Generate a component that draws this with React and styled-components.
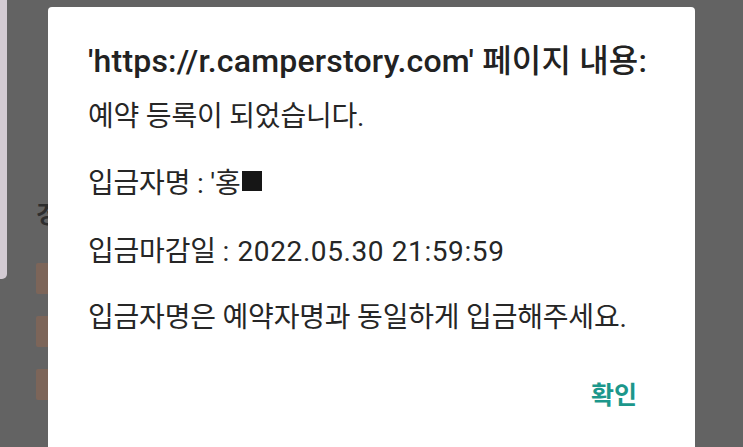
import React from 'react';
import styled, { createGlobalStyle } from 'styled-components';

const GlobalStyle = createGlobalStyle`
  html, body {
    margin: 0;
    padding: 0;
    background: #636363;
    overflow: hidden;
  }
  body {
    font-family: Roboto, "Noto Sans CJK KR", sans-serif;
  }
`;

const Screen = styled.div`
  position: relative;
  width: 743px;
  height: 447px;
  overflow: hidden;
  background: #636363;
`;

const Behind = styled.div`
  display: flex;
  flex-direction: column;
  align-items: flex-start;
`;

const SidePanel = styled.div`
  width: 7px;
  height: 281px;
  background: #d3cbd3;
  border-bottom-right-radius: 5px;
  margin-top: -2px;
`;

const PartialHeading = styled.div`
  margin: -78px 0 0 36px;
  font-size: 24px;
  font-weight: 700;
  color: #2e2e2e;
  line-height: 28px;
`;

const Chip = styled.div`
  width: 16px;
  height: 31px;
  margin-left: 36px;
  margin-top: ${p => p.$gap}px;
  background: #7c6559;
  border-radius: 2px;
`;

const Dialog = styled.div`
  position: absolute;
  left: 48px;
  top: 7px;
  width: 647px;
  height: 470px;
  box-sizing: border-box;
  background: #ffffff;
  border-radius: 4px 4px 0 0;
  padding: 36px 40px 0 40px;
  color: #232323;
  display: flex;
  flex-direction: column;
`;

const Title = styled.h1`
  margin: 0;
  font-size: 32px;
  font-weight: 500;
  line-height: 36px;
  letter-spacing: 0.2px;
  color: #222;
  white-space: nowrap;
`;

const Message = styled.p`
  margin: ${p => p.$top}px 0 0 0;
  font-size: 28px;
  font-weight: 400;
  line-height: 34px;
  letter-spacing: -0.2px;
  color: #262626;
  display: flex;
  align-items: center;
  white-space: nowrap;
`;

const Latin = styled.span`
  letter-spacing: 0.6px;
  margin-left: 0.3em;
`;

const Redacted = styled.span`
  display: inline-block;
  width: 20px;
  height: 20px;
  background: #161616;
  margin: -6px 0 0 1px;
`;

const Actions = styled.div`
  display: flex;
  justify-content: flex-end;
  margin-top: 44px;
  padding-right: 18px;
`;

const OkButton = styled.button`
  border: none;
  background: none;
  padding: 0;
  font-family: Roboto, "Noto Sans CJK KR", sans-serif;
  font-size: 25px;
  font-weight: 700;
  color: #1c978b;
  line-height: 34px;
  cursor: pointer;
`;

export default function App() {
  return (
    <>
      <GlobalStyle />
      <Screen>
        <Behind>
          <SidePanel />
          <PartialHeading>경</PartialHeading>
          <Chip $gap={34} />
          <Chip $gap={22} />
          <Chip $gap={22} />
        </Behind>
        <Dialog>
          <Title>'https://r.camperstory.com' 페이지 내용:</Title>
          <Message $top={21}>예약 등록이 되었습니다.</Message>
          <Message $top={33}>입금자명 : '홍<Redacted /></Message>
          <Message $top={34}>입금마감일 :<Latin>2022.05.30 21:59:59</Latin></Message>
          <Message $top={32}>입금자명은 예약자명과 동일하게 입금해주세요.</Message>
          <Actions>
            <OkButton>확인</OkButton>
          </Actions>
        </Dialog>
      </Screen>
    </>
  );
}
